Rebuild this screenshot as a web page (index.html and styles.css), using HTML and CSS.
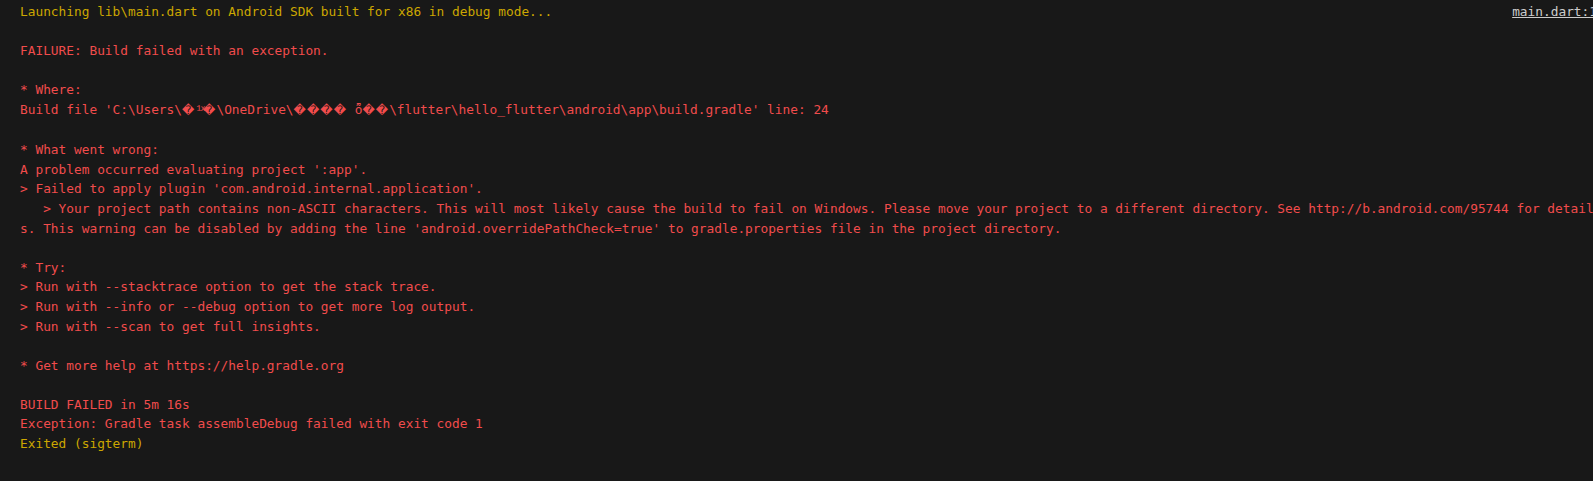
FILE: index.html
```html
<!DOCTYPE html>
<html>
<head>
<meta charset="utf-8">
<link rel="stylesheet" href="styles.css">
</head>
<body>
<div class="console">
  <div class="row first">
    <span class="line info">Launching lib\main.dart on Android SDK built for x86 in debug mode...</span>
    <span class="source">main.dart:1</span>
  </div>
  <div class="line"> </div>
  <div class="line err">FAILURE: Build failed with an exception.</div>
  <div class="line"> </div>
  <div class="line err">* Where:</div>
  <div class="line err">Build file 'C:\Users\<span class="bad">�</span>¹ͯ<span class="bad">�</span>\OneDrive\<span class="bad">����</span> ȭ<span class="bad">��</span>\flutter\hello_flutter\android\app\build.gradle' line: 24</div>
  <div class="line"> </div>
  <div class="line err">* What went wrong:</div>
  <div class="line err">A problem occurred evaluating project ':app'.</div>
  <div class="line err">&gt; Failed to apply plugin 'com.android.internal.application'.</div>
  <div class="line err">   &gt; Your project path contains non-ASCII characters. This will most likely cause the build to fail on Windows. Please move your project to a different directory. See http://b.android.com/95744 for detail</div>
  <div class="line err">s. This warning can be disabled by adding the line 'android.overridePathCheck=true' to gradle.properties file in the project directory.</div>
  <div class="line"> </div>
  <div class="line err">* Try:</div>
  <div class="line err">&gt; Run with --stacktrace option to get the stack trace.</div>
  <div class="line err">&gt; Run with --info or --debug option to get more log output.</div>
  <div class="line err">&gt; Run with --scan to get full insights.</div>
  <div class="line"> </div>
  <div class="line err">* Get more help at https://help.gradle.org</div>
  <div class="line"> </div>
  <div class="line err">BUILD FAILED in 5m 16s</div>
  <div class="line err">Exception: Gradle task assembleDebug failed with exit code 1</div>
  <div class="line info">Exited (sigterm)</div>
</div>
</body>
</html>
```
FILE: styles.css
```css
html, body {
  margin: 0;
  padding: 0;
  background: #181818;
  overflow: hidden;
  height: 100%;
}

.console {
  width: 1577px;
  padding: 2px 0 0 20px;
  font-family: "DejaVu Sans Mono", "Liberation Mono", monospace;
  font-size: 12.82px;
  line-height: 19.6px;
  color: #f14c4c;
}

.row {
  display: flex;
  justify-content: space-between;
  align-items: baseline;
}

.line {
  white-space: pre;
  min-height: 19.6px;
}

.info {
  color: #cca700;
}

.err {
  color: #f14c4c;
}

.bad {
  font-family: "DejaVu Sans", sans-serif;
  font-size: 12px;
  letter-spacing: 1.05px;
}

.source {
  color: #cccccc;
  text-decoration: underline;
  white-space: pre;
}
```
